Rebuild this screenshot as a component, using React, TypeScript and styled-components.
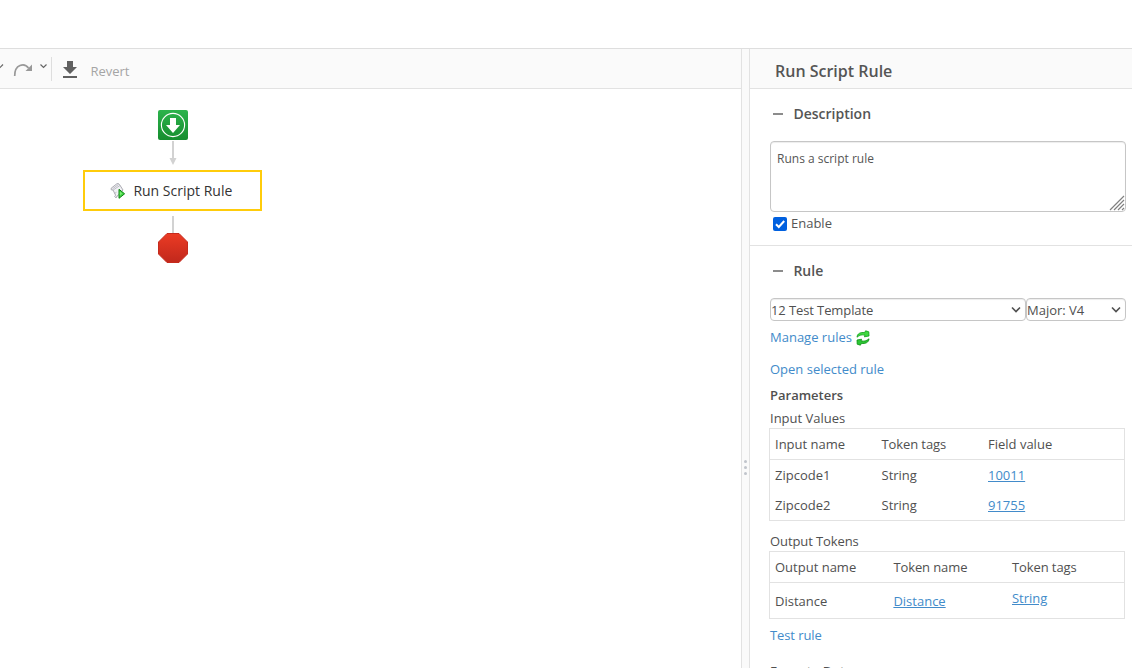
import React from "react";
import styled, { createGlobalStyle } from "styled-components";

const Global = createGlobalStyle`
  * { box-sizing: border-box; }
  body { margin: 0; background: #fff; overflow: hidden; color: #505050; font: 13px/18px "Open Sans", "Noto Sans", sans-serif; }
`;

const Page = styled.div`
  display: flex; flex-direction: column; height: 668px; overflow: hidden;
`;
const TopSpace = styled.header`height: 48px; flex: none;`;
const Workspace = styled.div`
  flex: 1; min-height: 0; display: flex; border-top: 1px solid #dedede;
`;
const Editor = styled.main`width: 741px; flex: none;`;
const Toolbar = styled.div`
  display: flex; align-items: center; height: 40px; background: #fafafa; border-bottom: 1px solid #e2e2e2;
`;
const ToolbarIcons = styled.svg`display: block; flex: none;`;
const Revert = styled.span`margin: 4px 0 0 10.4px; color: #a5a5a5;`;

const Flow = styled.div`
  display: flex; flex-direction: column; align-items: center; width: 179px; margin: 21px 0 0 83px;
`;
const FlowIcon = styled.svg`display: block; margin-left: 1px;`;
const Step = styled.div`
  display: flex; align-items: center; width: 179px; height: 41px; padding-left: 25px;
  border: 2px solid #ffcc0b; color: #333; font-size: 14px; gap: 7.4px;
`;

const Splitter = styled.div`
  display: flex; flex-direction: column; align-items: center; gap: 3px; width: 9px; flex: none; padding-top: 411px;
  background: #fafafa; border-left: 1px solid #e2e2e2; border-right: 1px solid #e2e2e2;
`;
const Dot = styled.i`width: 3px; height: 3px; border-radius: 50%; background: #c0c4cb;`;

const Side = styled.aside`flex: 1; min-width: 0; overflow: hidden;`;
const SideTitle = styled.h1`
  margin: 0; height: 40px; padding: 4px 0 0 25px; background: #fafafa; border-bottom: 1px solid #e2e2e2;
  font-size: 16px; line-height: 36px; font-weight: 600; color: #555;
`;
const Section = styled.section<{ $height?: number }>`
  padding: 15px 6px 0 20px; height: ${(p) => (p.$height ? `${p.$height}px` : "auto")};
  border-bottom: 1px solid #e2e2e2;
`;
const SectionHead = styled.h2`
  display: flex; align-items: center; gap: 10.4px; margin: 0; padding-left: 3px; height: 20px;
  font-size: 14px; line-height: 20px; font-weight: 600; color: #555;
  &::before { content: ""; width: 10px; height: 2px; background: #8c8c8c; }
`;
const TextBox = styled.textarea`
  display: block; width: 356px; height: 71px; margin-top: 17px; padding: 8px 6px; resize: none;
  border: 1px solid #c6c6c6; border-radius: 4px; outline: none; color: #555;
  font: 12px/18px "Open Sans", sans-serif; box-shadow: inset 0 1px 1px rgba(0,0,0,.075);
`;
const BoxWrap = styled.div`position: relative;`;
const Grip = styled.svg`position: absolute; right: 1px; bottom: 1px;`;
const Enable = styled.label`
  display: flex; align-items: center; gap: 4px; height: 18px; margin: 2px 0 0 3px; color: #555;
  svg { margin-top: 2px; }
`;

const Selects = styled.div`display: flex; margin-top: 17px;`;
const Select = styled.div<{ $width: number }>`
  display: flex; align-items: center; justify-content: space-between; width: ${(p) => p.$width}px; height: 23px;
  padding: 1px 4px 0 0; border: 1px solid #c6c6c6; border-radius: 4px; box-shadow: inset 0 1px 1px rgba(0,0,0,.075);
`;
const Tight = styled.span`letter-spacing: -0.1px;`;
const Link = styled.a<{ $underline?: boolean; $raised?: boolean }>`
  color: #428bca; text-decoration: ${(p) => (p.$underline ? "underline" : "none")};
  padding-bottom: ${(p) => (p.$raised ? "6px" : "0")};
`;
const Line = styled.div<{ $top: number; $bold?: boolean }>`
  display: flex; align-items: center; gap: 4px; height: 18px; margin-top: ${(p) => p.$top}px;
  font-weight: ${(p) => (p.$bold ? 600 : 400)};
  svg { margin-top: 2px; }
`;
const Table = styled.div`
  width: 356px; margin: 1px 0 0 -1px; border: 1px solid #e2e2e2;
`;
const Row = styled.div<{ $cols: string; $height: number; $head?: boolean }>`
  display: grid; grid-template-columns: ${(p) => p.$cols}; align-items: center; height: ${(p) => p.$height}px;
  padding-left: 5px; border-bottom: ${(p) => (p.$head ? "1px solid #e2e2e2" : "0")};
`;

const Chevron = () => (
  <svg width="10" height="8" viewBox="0 0 10 8"><path d="M1 1.5 5 5.5 9 1.5" fill="none" stroke="#505050" strokeWidth="1.6" /></svg>
);

const ScriptIcon = () => (
  <svg width="16" height="16" viewBox="0 0 16 16">
    <path d="M1.2 5.2 6.8.8q1.6-1 2.7.7L13 7l-6 6.5-1 1.4-1.3-1.4.9-1.3L3 7 1.2 6.8Z" fill="#f1f1f5" stroke="#a2a2a9" strokeWidth=".9" />
    <path d="m2.6 5.8 6-4.4M3.2 7l6.6-4.4M4.5 10.5l2-1.3M6 14.5 8 12" fill="none" stroke="#b0b0b8" strokeWidth=".8" />
    <path d="M9 6.3v9l5.6-4.5Z" fill="#44d544" stroke="#0c8212" />
    <path d="M9.8 8.4v4l2.4-1.9Z" fill="#a2ff98" opacity=".6" />
  </svg>
);

const RefreshIcon = () => (
  <svg width="14" height="16" viewBox="0 0 14 16">
    <path d="M1 7.2C1.2 3.6 4.4 2 8.6 2.6L9.6.8 12.8 1.8 13 6 8.4 6.8 9 5.2C6 4.4 3.6 5 1 7.2Z" fill="#3fd83f" stroke="#0c9d16" strokeWidth=".8" />
    <path d="M13 8.8C12.8 12.4 9.6 14 5.4 13.4l-1 1.8L1.2 14.2 1 10l4.6-.8L5 10.8C8 11.6 10.4 11 13 8.8Z" fill="#2cc535" stroke="#08920f" strokeWidth=".8" />
  </svg>
);

const inputs = [["Zipcode1", "10011"], ["Zipcode2", "91755"]];
const inputCols = "106.5px 106.5px 1fr";
const outputCols = "118.4px 118.6px 1fr";

export default function App() {
  return (
    <Page>
      <Global />
      <TopSpace />
      <Workspace>
        <Editor>
          <Toolbar>
            <ToolbarIcons width="80" height="39" viewBox="0 0 80 39">
              <path d="m-3 15.5 3 3 3-3M40.5 15.5l3 3 3-3" fill="none" stroke="#666" strokeWidth="1.2" />
              <path d="M14.7 27C14.5 15 24.5 13.5 28.5 19" fill="none" stroke="#999" strokeWidth="1.7" />
              <path d="M32 15.5V22h-6.5Z" fill="#999" />
              <path d="M51.5 8v24" stroke="#dedede" />
              <path d="M67 12h6v6h4l-7 7-7-7h4Z" fill="#606060" />
              <path d="M63 27h14v2H63Z" fill="#606060" />
            </ToolbarIcons>
            <Revert>Revert</Revert>
          </Toolbar>
          <Flow>
            <FlowIcon width="30" height="60" viewBox="0 0 30 60">
              <defs>
                <linearGradient id="start" x2="0" y2="1"><stop stopColor="#2cb34c" /><stop offset="1" stopColor="#158d2e" /></linearGradient>
              </defs>
              <rect width="30" height="30" rx="2" fill="url(#start)" />
              <circle cx="15" cy="15" r="11.6" fill="none" stroke="#fff" strokeWidth="1.1" />
              <path d="M12 8h6v7h4l-7 8-7-8h4Z" fill="#fff" />
              <path d="M14 31h2v17h2.5L15 55l-3.5-7H14Z" fill="#d2d2d2" />
            </FlowIcon>
            <Step><ScriptIcon />Run Script Rule</Step>
            <FlowIcon width="30" height="54" viewBox="0 0 30 54">
              <defs>
                <linearGradient id="stop" x2="0" y2="1"><stop stopColor="#eb3b24" /><stop offset="1" stopColor="#c1281c" /></linearGradient>
              </defs>
              <path d="M14 5h2v17h-2Z" fill="#d2d2d2" />
              <path d="M9 22.5h12l8.5 8.5v12L21 51.5H9L.5 43V31Z" fill="url(#stop)" stroke="#c62b1d" />
            </FlowIcon>
          </Flow>
        </Editor>
        <Splitter><Dot /><Dot /><Dot /></Splitter>
        <Side>
          <SideTitle>Run Script Rule</SideTitle>
          <Section $height={157}>
            <SectionHead>Description</SectionHead>
            <BoxWrap>
              <TextBox defaultValue="Runs a script rule" spellCheck={false} />
              <Grip width="16" height="16" viewBox="0 0 16 16">
                <path d="M1 15 15 1M5 15 15 5M9 15l6-6M13 15l2-2" stroke="#808080" strokeWidth="1.2" />
              </Grip>
            </BoxWrap>
            <Enable>
              <svg width="14" height="14" viewBox="0 0 14 14">
                <rect width="14" height="14" rx="2" fill="#0060df" />
                <path d="m3 7.2 2.8 2.8L11.2 4" fill="none" stroke="#fff" strokeWidth="2" />
              </svg>
              Enable
            </Enable>
          </Section>
          <Section>
            <SectionHead>Rule</SectionHead>
            <Selects>
              <Select $width={256}><Tight>12 Test Template</Tight><Chevron /></Select>
              <Select $width={100}>Major: V4<Chevron /></Select>
            </Selects>
            <Line $top={7}><Link>Manage rules</Link><RefreshIcon /></Line>
            <Line $top={14}><Link>Open selected rule</Link></Line>
            <Line $top={8} $bold>Parameters</Line>
            <Line $top={5}>Input Values</Line>
            <Table>
              <Row $cols={inputCols} $height={31} $head><span>Input name</span><Tight>Token tags</Tight><span>Field value</span></Row>
              {inputs.map(([name, value]) => (
                <Row key={name} $cols={inputCols} $height={30}><span>{name}</span><span>String</span><Link $underline>{value}</Link></Row>
              ))}
            </Table>
            <Line $top={11}><Tight>Output Tokens</Tight></Line>
            <Table>
              <Row $cols={outputCols} $height={31} $head><span>Output name</span><Tight>Token name</Tight><Tight>Token tags</Tight></Row>
              <Row $cols={outputCols} $height={35}><span>Distance</span><Link $underline>Distance</Link><Link $underline $raised>String</Link></Row>
            </Table>
            <Line $top={7}><Link><Tight>Test rule</Tight></Link></Line>
            <Line $top={18} $bold>Execute Data</Line>
          </Section>
        </Side>
      </Workspace>
    </Page>
  );
}
